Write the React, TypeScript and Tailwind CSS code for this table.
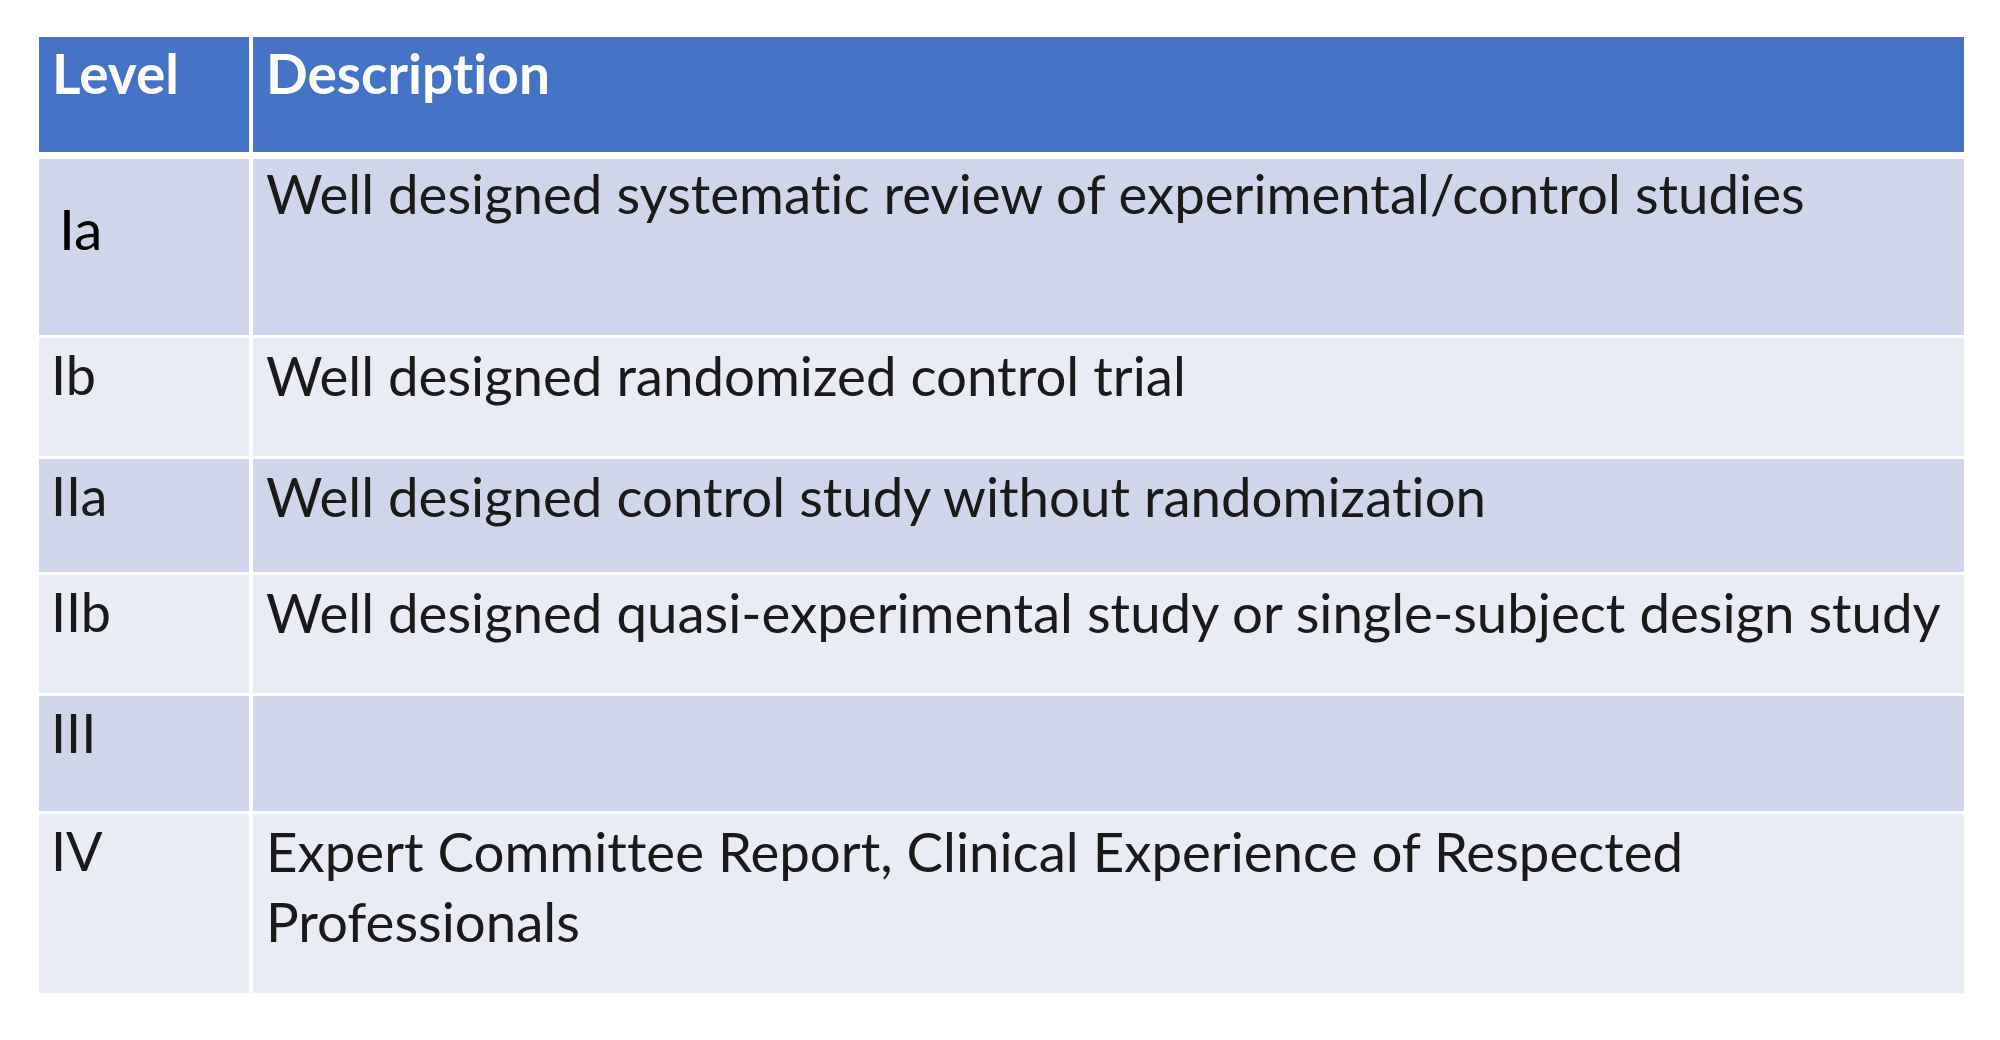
export default function App() {
  // Evidence levels table
  const rows = [
    { level: "Ia", desc: "Well designed systematic review of experimental/control studies", h: "h-[176px]", dark: true },
    { level: "Ib", desc: "Well designed randomized control trial", h: "h-[118px]", dark: false },
    { level: "IIa", desc: "Well designed control study without randomization", h: "h-[113px]", dark: true },
    { level: "IIb", desc: "Well designed quasi-experimental study or single-subject design study", h: "h-[118px]", dark: false },
    { level: "III", desc: "", h: "h-[115px]", dark: true },
    {
      level: "IV",
      desc: "Expert Committee Report, Clinical Experience of Respected Professionals",
      h: "h-[179px]",
      dark: false,
    },
  ]

  return (
    <div className="w-[2000px] h-[1040px] bg-white pt-[37px] pl-[39px] font-['Lato',sans-serif] text-[#1a1a1a] [font-variant-ligatures:none]">
      <div className="w-[1925px] flex flex-col gap-[3px]">
        {/* Header */}
        <div className="grid grid-cols-[210px_1fr] gap-x-[4px] h-[115px] mb-[4px]">
          <div className="bg-[#4472c4] text-white font-bold text-[55px] leading-[70px] pl-[13px] pt-[1px]">
            Level
          </div>
          <div className="bg-[#4472c4] text-white font-bold text-[55px] leading-[70px] pl-[13px] pt-[1px]">
            Description
          </div>
        </div>

        {rows.map((row) => (
          <div key={row.level} className={`grid grid-cols-[210px_1fr] gap-x-[4px] ${row.h}`}>
            <div className={`${row.dark ? "bg-[#cfd5ea]" : "bg-[#e9ebf5]"} pl-[12px]`}>
              {row.level === "Ia" ? (
                <div className="pt-[34px] pl-[8px] text-[57px] leading-[70px] text-black">Ia</div>
              ) : (
                <div className="pt-[2px] text-[54px] leading-[70px]">{row.level}</div>
              )}
            </div>
            <div
              className={`${row.dark ? "bg-[#cfd5ea]" : "bg-[#e9ebf5]"} pl-[13px] pr-[20px] ${
                row.level === "Ia" ? "leading-[68px]" : "pt-[2px] leading-[70px]"
              } text-[54.6px]`}
            >
              {row.desc}
            </div>
          </div>
        ))}
      </div>
    </div>
  )
}
